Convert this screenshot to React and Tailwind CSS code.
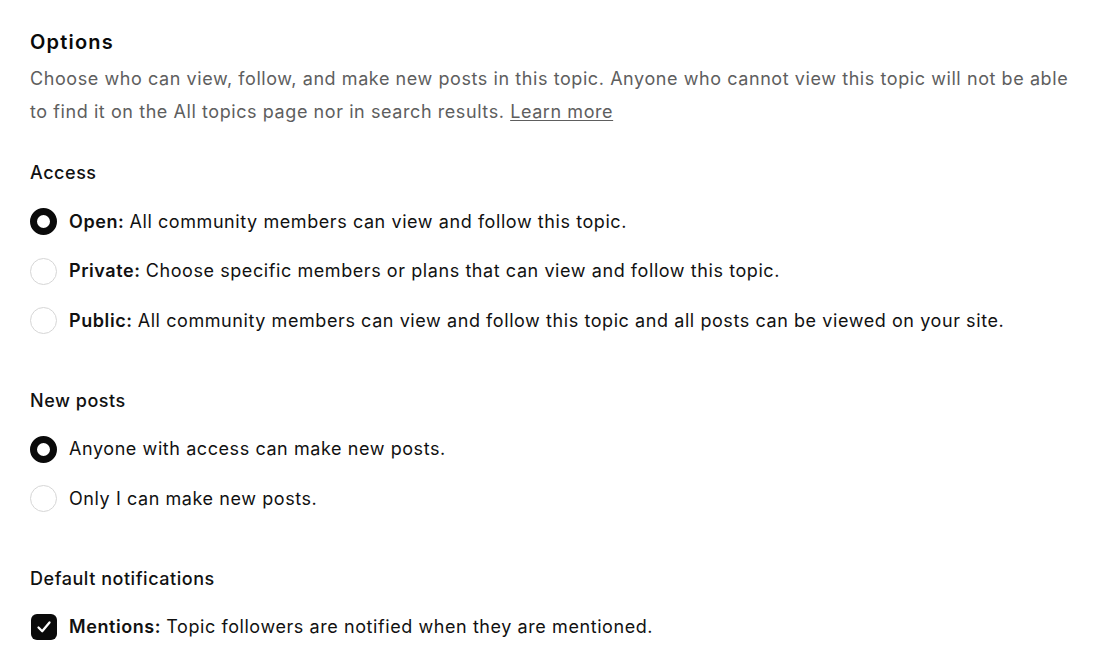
import React from "react";

function Radio({ checked }) {
  return checked ? (
    <span className="box-border w-[27px] h-[27px] shrink-0 rounded-full border-[7px] border-[#0a0a0a] bg-white" />
  ) : (
    <span className="box-border w-[27px] h-[27px] shrink-0 rounded-full border border-[#d6d6d6] bg-white" />
  );
}

function Checkbox() {
  return (
    <span className="ml-[1px] w-[26px] h-[26px] shrink-0 rounded-[6px] bg-[#0a0a0a] flex items-center justify-center">
      <svg width="18" height="18" viewBox="0 0 18 18" fill="none">
        <path d="M3.5 9.5L7.2 13.2L14.5 4.5" stroke="white" strokeWidth="2.3" strokeLinecap="round" strokeLinejoin="round" />
      </svg>
    </span>
  );
}

function Row({ control, label, text }) {
  return (
    <div className="flex items-center gap-[12px] h-[28px]">
      {control}
      <span className="text-[18px] leading-[28px] tracking-[0.032em] text-[#111111]">
        {label && <span className="font-semibold">{label} </span>}
        {text}
      </span>
    </div>
  );
}

function Section({ title, children }) {
  return (
    <div className="flex flex-col gap-[20.5px]">
      <h3 className="text-[18px] leading-[28px] font-medium tracking-[0.03em] text-[#111111]">{title}</h3>
      <div className="flex flex-col gap-[21.5px]">{children}</div>
    </div>
  );
}

export default function App() {
  return (
    <div
      className="min-h-screen bg-white pl-[30px] pr-[20px] pt-[28px]"
      style={{ fontFamily: "Inter, 'Noto Sans', sans-serif" }}
    >
      <h2 className="text-[20px] leading-[28px] font-semibold tracking-[0.06em] text-[#0a0a0a]">Options</h2>
      <p className="mt-[6px] max-w-[1048px] text-[18px] leading-[33px] tracking-[0.032em] text-[#5e5e5e]">
        Choose who can view, follow, and make new posts in this topic. Anyone who cannot view this topic will not be able to find it on the All topics page nor in search results.{" "}
        <a className="underline underline-offset-2 text-[#5e5e5e]">Learn more</a>
      </p>

      <div className="mt-[31px] flex flex-col gap-[52px]">
        <Section title="Access">
          <Row control={<Radio checked />} label="Open:" text="All community members can view and follow this topic." />
          <Row control={<Radio />} label="Private:" text="Choose specific members or plans that can view and follow this topic." />
          <Row control={<Radio />} label="Public:" text="All community members can view and follow this topic and all posts can be viewed on your site." />
        </Section>
        <Section title="New posts">
          <Row control={<Radio checked />} text="Anyone with access can make new posts." />
          <Row control={<Radio />} text="Only I can make new posts." />
        </Section>
        <Section title="Default notifications">
          <Row control={<Checkbox />} label="Mentions:" text="Topic followers are notified when they are mentioned." />
        </Section>
      </div>
    </div>
  );
}
